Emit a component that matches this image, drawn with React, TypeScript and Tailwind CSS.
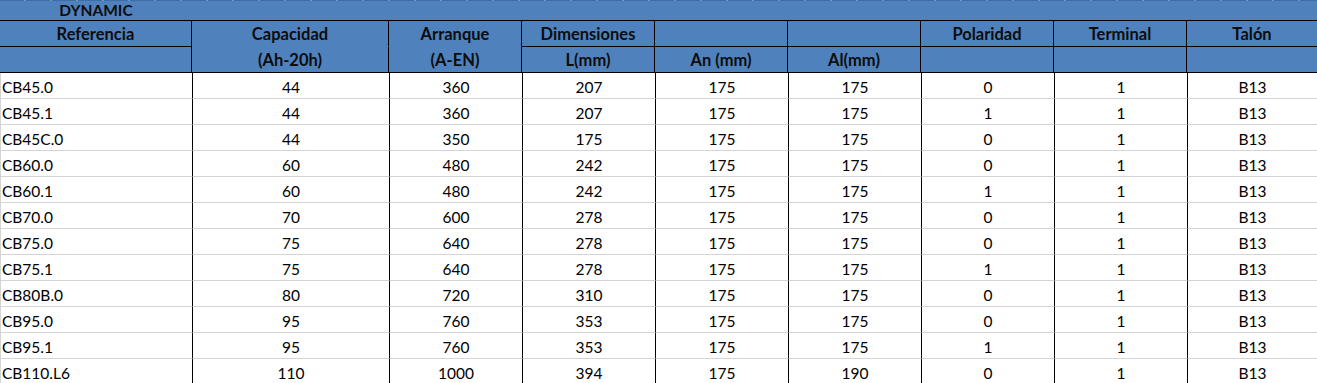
const ROWS = [
  ["CB45.0", "44", "360", "207", "175", "175", "0", "1", "B13"],
  ["CB45.1", "44", "360", "207", "175", "175", "1", "1", "B13"],
  ["CB45C.0", "44", "350", "175", "175", "175", "0", "1", "B13"],
  ["CB60.0", "60", "480", "242", "175", "175", "0", "1", "B13"],
  ["CB60.1", "60", "480", "242", "175", "175", "1", "1", "B13"],
  ["CB70.0", "70", "600", "278", "175", "175", "0", "1", "B13"],
  ["CB75.0", "75", "640", "278", "175", "175", "0", "1", "B13"],
  ["CB75.1", "75", "640", "278", "175", "175", "1", "1", "B13"],
  ["CB80B.0", "80", "720", "310", "175", "175", "0", "1", "B13"],
  ["CB95.0", "95", "760", "353", "175", "175", "0", "1", "B13"],
  ["CB95.1", "95", "760", "353", "175", "175", "1", "1", "B13"],
  ["CB110.L6", "110", "1000", "394", "175", "190", "0", "1", "B13"],
];

// first header row: [label, draws bottom border]
const HEAD_TOP: [string, boolean][] = [
  ["Referencia", true],
  ["Capacidad", false],
  ["Arranque", false],
  ["Dimensiones", true],
  ["", true],
  ["", true],
  ["Polaridad", true],
  ["Terminal", true],
  ["Talón", true],
];

const HEAD_SUB = ["", "(Ah-20h)", "(A-EN)", "L(mm)", "An (mm)", "Al(mm)", "", "", ""];

const GRID = "grid grid-cols-[192px_197px_133px_133px_133px_133px_133px_133px_1fr]";

export default function App() {
  return (
    <div className="h-[383px] w-[1317px] overflow-hidden bg-white font-['Lato','Liberation_Sans',sans-serif] text-[15.5px] text-black">
      {/* sheet title band */}
      <div className="bg-[#4f81bd] text-[16.5px] text-[#0d0d0d]">
        <div className="h-px bg-[repeating-linear-gradient(to_right,#3f6da6_0px,#3f6da6_24px,#6e98cc_24px,#6e98cc_26px)]" />
        <div className={`${GRID} h-[20px] border-b border-black`}>
          <div className="text-center text-[15.5px] font-bold leading-[18px]">DYNAMIC</div>
        </div>

        <div className={GRID}>
          {HEAD_TOP.map(([label, line], i) => (
            <div
              key={i}
              className={`h-[26px] border-b pt-[4px] text-center font-bold leading-[18px] ${
                line ? "border-black" : "border-[#4f81bd]"
              } ${i < 8 ? "border-r border-r-black" : ""}`}
            >
              {label}
            </div>
          ))}
          {HEAD_SUB.map((label, i) => (
            <div
              key={i}
              className={`h-[26px] border-b border-black pt-[4px] text-center font-bold leading-[18px] ${
                i < 8 ? "border-r" : ""
              }`}
            >
              {label}
            </div>
          ))}
        </div>
      </div>

      {ROWS.map((row) => (
        <div key={row[0]} className={`${GRID} border-l border-l-[#d4d4d4]`}>
          {row.map((v, i) => (
            <div
              key={i}
              className={`h-[26px] border-b border-[#d4d4d4] pt-[5px] leading-[18px] ${
                i === 0 ? "pl-[1px] text-left" : "text-center"
              } ${i < 8 ? "border-r border-r-black" : ""}`}
            >
              {v}
            </div>
          ))}
        </div>
      ))}
    </div>
  );
}
